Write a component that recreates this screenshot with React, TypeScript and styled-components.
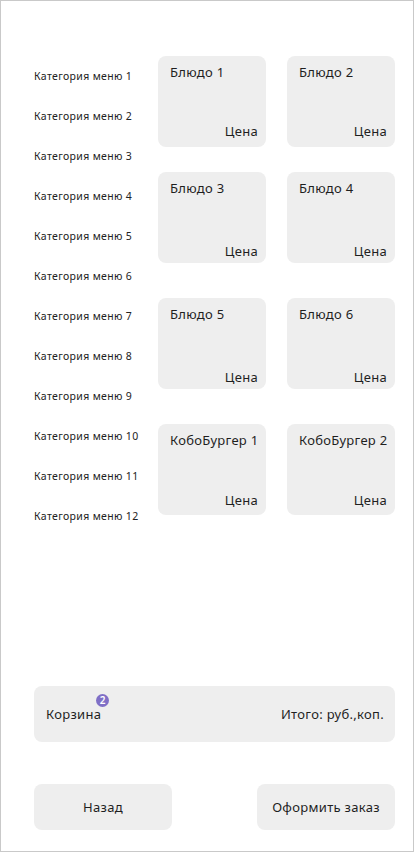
import React from "react";
import styled, { createGlobalStyle } from "styled-components";

const GlobalStyle = createGlobalStyle`
  html, body { margin: 0; padding: 0; background: #ffffff; }
  * { box-sizing: border-box; }
  body { font-family: "Noto Sans", "Open Sans", sans-serif; color: #1f1f1f; }
`;

const Frame = styled.div`
  width: 414px;
  height: 852px;
  border: 1px solid #c9c9c9;
  display: flex;
  flex-direction: column;
  padding: 55px 18px 21px 33px;
  background: #ffffff;
`;

const Content = styled.div`
  display: flex;
  flex-direction: row;
`;

const CategoryList = styled.ul`
  list-style: none;
  margin: 0;
  padding: 0;
  width: 124px;
  display: flex;
  flex-direction: column;
`;

const CategoryItem = styled.li`
  height: 40px;
  display: flex;
  align-items: center;
  font-size: 10.5px;
  letter-spacing: 0.35px;
  color: #222222;
  white-space: nowrap;
`;

const CardGrid = styled.div`
  display: flex;
  flex-direction: column;
`;

const CardRow = styled.div<{ $gap: number }>`
  display: grid;
  grid-template-columns: 108px 108px;
  column-gap: 21px;
  margin-top: ${(p) => p.$gap}px;
`;

const Card = styled.div<{ $bottom: number }>`
  height: 91px;
  background: #eeeeee;
  border-radius: 8px;
  display: flex;
  flex-direction: column;
  justify-content: space-between;
  padding: 7px 8px ${(p) => p.$bottom}px 12px;
  font-size: 13px;
  letter-spacing: 0.3px;
  color: #1f1f1f;
`;

const CardTitle = styled.div`
  line-height: 18px;
  white-space: nowrap;
`;

const CardPrice = styled.div`
  line-height: 18px;
  text-align: right;
`;

const Cart = styled.div`
  margin-top: auto;
  height: 56px;
  background: #eeeeee;
  border-radius: 8px;
  display: flex;
  align-items: center;
  justify-content: space-between;
  padding: 0 11px 0 12px;
  font-size: 13px;
  letter-spacing: 0.3px;
`;

const CartLabel = styled.span`
  position: relative;
  line-height: 18px;
`;

const Badge = styled.span`
  position: absolute;
  top: -11px;
  right: -8px;
  width: 13px;
  height: 13px;
  border-radius: 50%;
  background: #7f6fc6;
  color: #ffffff;
  font-size: 10px;
  line-height: 13px;
  text-align: center;
  letter-spacing: 0;
  font-weight: 600;
`;

const Total = styled.span`
  line-height: 18px;
`;

const Footer = styled.div`
  margin-top: 42px;
  display: flex;
  justify-content: space-between;
`;

const Button = styled.button`
  width: 138px;
  height: 46px;
  border: none;
  border-radius: 8px;
  background: #eeeeee;
  font-family: "Noto Sans", "Open Sans", sans-serif;
  font-size: 13px;
  letter-spacing: 0.3px;
  color: #1f1f1f;
  padding: 0;
  cursor: pointer;
`;

const categories = Array.from({ length: 12 }, (_, i) => `Категория меню ${i + 1}`);

const rows: { gap: number; priceBottom: number; items: string[] }[] = [
  { gap: 0, priceBottom: 7, items: ["Блюдо 1", "Блюдо 2"] },
  { gap: 25, priceBottom: 3, items: ["Блюдо 3", "Блюдо 4"] },
  { gap: 35, priceBottom: 3, items: ["Блюдо 5", "Блюдо 6"] },
  { gap: 35, priceBottom: 6, items: ["КобоБургер 1", "КобоБургер 2"] },
];

export default function App() {
  return (
    <>
      <GlobalStyle />
      <Frame>
        <Content>
          <CategoryList>
            {categories.map((c) => (
              <CategoryItem key={c}>{c}</CategoryItem>
            ))}
          </CategoryList>
          <CardGrid>
            {rows.map((row, i) => (
              <CardRow key={i} $gap={row.gap}>
                {row.items.map((name) => (
                  <Card key={name} $bottom={row.priceBottom}>
                    <CardTitle>{name}</CardTitle>
                    <CardPrice>Цена</CardPrice>
                  </Card>
                ))}
              </CardRow>
            ))}
          </CardGrid>
        </Content>
        <Cart>
          <CartLabel>
            Корзина
            <Badge>2</Badge>
          </CartLabel>
          <Total>Итого: руб.,коп.</Total>
        </Cart>
        <Footer>
          <Button>Назад</Button>
          <Button>Оформить заказ</Button>
        </Footer>
      </Frame>
    </>
  );
}
